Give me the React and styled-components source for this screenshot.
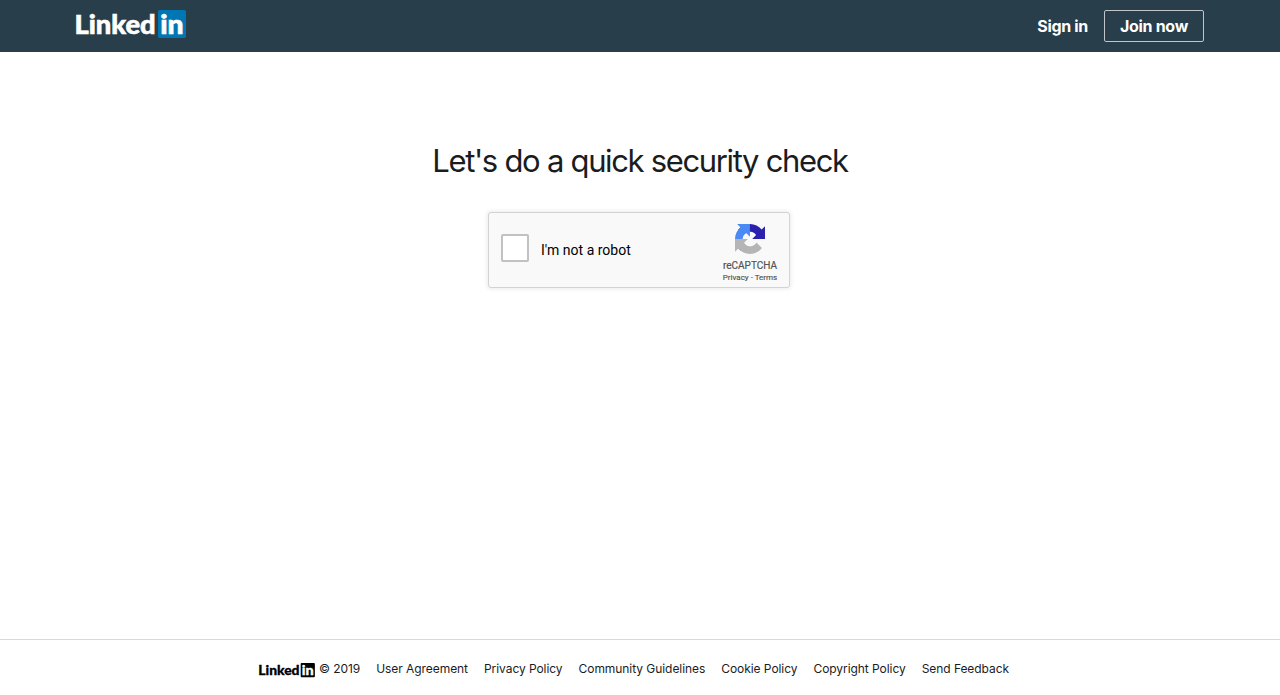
import React from "react";
import styled, { createGlobalStyle } from "styled-components";

const GlobalStyle = createGlobalStyle`
  * { box-sizing: border-box; }
  body { margin: 0; background: #fff; font-family: Inter, "Liberation Sans", sans-serif; }
`;

const Page = styled.div`
  display: flex;
  flex-direction: column;
  height: 695px;
  overflow: hidden;
`;

const Header = styled.header`
  display: flex;
  justify-content: space-between;
  height: 52px;
  padding: 10px 76px 0;
  background: #283e4a;
`;

const Wordmark = styled.svg`
  display: block;
  flex: none;
  overflow: visible;
  width: ${(p) => p.$width}px;
  height: ${(p) => p.$height}px;
  margin-top: ${(p) => p.$top || 0}px;
`;

const Nav = styled.nav`
  display: flex;
  align-items: center;
  gap: 16px;
  height: 32px;
`;

const NavLink = styled.a`
  color: #fff;
  font-size: 16px;
  font-weight: 700;
  line-height: 32px;
  letter-spacing: -0.32px;
  white-space: nowrap;
`;

const JoinButton = styled(NavLink)`
  width: 100px;
  height: 32px;
  line-height: 31px;
  border: 1px solid #bfc5c9;
  border-radius: 2px;
  text-align: center;
`;

const Main = styled.main`
  flex: 1;
  display: flex;
  flex-direction: column;
  align-items: center;
  padding-top: 89px;
`;

const Title = styled.h1`
  margin: 0;
  color: #1a1c1e;
  font-size: 31px;
  font-weight: 400;
  line-height: 40px;
  letter-spacing: -1.38px;
  word-spacing: 0.3px;
  white-space: nowrap;
`;

const Captcha = styled.section`
  display: flex;
  width: 302px;
  height: 76px;
  margin: 31px 2px 0 0;
  padding-left: 12px;
  background: #f9f9f9;
  border: 1px solid #d3d3d3;
  border-radius: 3px;
  box-shadow: 0 0 4px 1px rgba(0, 0, 0, 0.08);
  font-family: Roboto, sans-serif;
`;

const CheckBox = styled.span`
  flex: none;
  width: 28px;
  height: 28px;
  margin-top: 21px;
  background: #fff;
  border: 2px solid #c1c1c1;
  border-radius: 2px;
`;

const CheckLabel = styled.span`
  flex: 1;
  padding-left: 12px;
  color: #000;
  font-size: 14px;
  line-height: 74px;
`;

const Brand = styled.div`
  display: flex;
  flex-direction: column;
  align-items: center;
  width: 78px;
  padding-top: 11px;
  color: #555;
`;

const BrandName = styled.span`
  margin-top: 6px;
  font-size: 10px;
  line-height: 12px;
  -webkit-text-stroke: 0.2px #555;
`;

const BrandLinks = styled.span`
  margin-top: 1px;
  font-size: 8px;
  line-height: 10px;
  -webkit-text-stroke: 0.15px #555;
`;

const Footer = styled.footer`
  display: flex;
  justify-content: center;
  height: 56px;
  padding: 21px 12px 0 0;
  border-top: 1px solid #d9d9d9;
`;

const FooterItem = styled.span`
  display: flex;
  margin-right: ${(p) => (p.$last ? 0 : 16)}px;
  color: #1a1c1e;
  font-size: 12px;
  line-height: 16px;
  letter-spacing: -0.06px;
  white-space: nowrap;
`;

const Copyright = styled.span`
  margin-left: 4px;
`;

function LinkedInLogo({ width, height, top, color, tile, inset }) {
  return (
    <Wordmark $width={width} $height={height} $top={top} viewBox="0 0 110 28" role="img" aria-label="LinkedIn">
      <rect x="82" y="0" width="28" height="28" rx="1.8" fill={tile} />
      <g fontFamily="Lato, sans-serif" fontWeight="900" fontSize="25.8" strokeWidth="0.6">
        <text x="-1.6" y="23.7" textLength="81.2" lengthAdjust="spacingAndGlyphs" fill={color} stroke={color}>Linked</text>
        <text x="84.2" y="23.7" textLength="23.4" lengthAdjust="spacingAndGlyphs" fill={inset} stroke={inset}>in</text>
      </g>
    </Wordmark>
  );
}

function RecaptchaLogo() {
  return (
    <svg width="30" height="30" viewBox="0 0 64 64" aria-hidden="true">
      <path fill="#2a22ae" d="M64 31.955l-.033-1.37V4.687l-7.16 7.16C50.948 4.674 42.033.093 32.05.093c-10.4 0-19.622 4.96-25.458 12.64l11.736 11.86a15.55 15.55 0 0 1 4.754-5.334c2.05-1.6 4.952-2.906 8.968-2.906.485 0 .86.057 1.135.163 4.976.393 9.288 3.14 11.828 7.124l-8.307 8.307L64 31.953" />
      <path fill="#4a8af4" d="M31.862.094l-1.37.033H4.594l7.16 7.16C4.58 13.147 0 22.06 0 32.046c0 10.4 4.96 19.622 12.64 25.458L24.5 45.768a15.55 15.55 0 0 1-5.334-4.754c-1.6-2.05-2.906-4.952-2.906-8.968 0-.485.057-.86.163-1.135.393-4.976 3.14-9.288 7.124-11.828l8.307 8.307L31.86.095" />
      <path fill="#b5b5b5" d="M.001 32.045l.033 1.37v25.898l7.16-7.16c5.86 7.173 14.774 11.754 24.76 11.754 10.4 0 19.622-4.96 25.458-12.64l-11.736-11.86a15.55 15.55 0 0 1-4.754 5.334c-2.05 1.6-4.952 2.906-8.968 2.906-.485 0-.86-.057-1.135-.163-4.976-.393-9.288-3.14-11.828-7.124l8.307-8.307c-10.522.04-22.4.066-27.295-.005" />
    </svg>
  );
}

const links = [
  "User Agreement",
  "Privacy Policy",
  "Community Guidelines",
  "Cookie Policy",
  "Copyright Policy",
  "Send Feedback",
];

export default function App() {
  return (
    <Page>
      <GlobalStyle />
      <Header>
        <LinkedInLogo width={110} height={28} color="#fff" tile="#0077b5" inset="#fff" />
        <Nav>
          <NavLink>Sign in</NavLink>
          <JoinButton>Join now</JoinButton>
        </Nav>
      </Header>
      <Main>
        <Title>Let's do a quick security check</Title>
        <Captcha>
          <CheckBox role="checkbox" aria-checked="false" />
          <CheckLabel>I'm not a robot</CheckLabel>
          <Brand>
            <RecaptchaLogo />
            <BrandName>reCAPTCHA</BrandName>
            <BrandLinks>Privacy - Terms</BrandLinks>
          </Brand>
        </Captcha>
      </Main>
      <Footer>
        <FooterItem>
          <LinkedInLogo width={56} height={14.2} top={2} color="#000" tile="#000" inset="#fff" />
          <Copyright>© 2019</Copyright>
        </FooterItem>
        {links.map((label, i) => (
          <FooterItem key={label} $last={i === links.length - 1}>
            {label}
          </FooterItem>
        ))}
      </Footer>
    </Page>
  );
}
